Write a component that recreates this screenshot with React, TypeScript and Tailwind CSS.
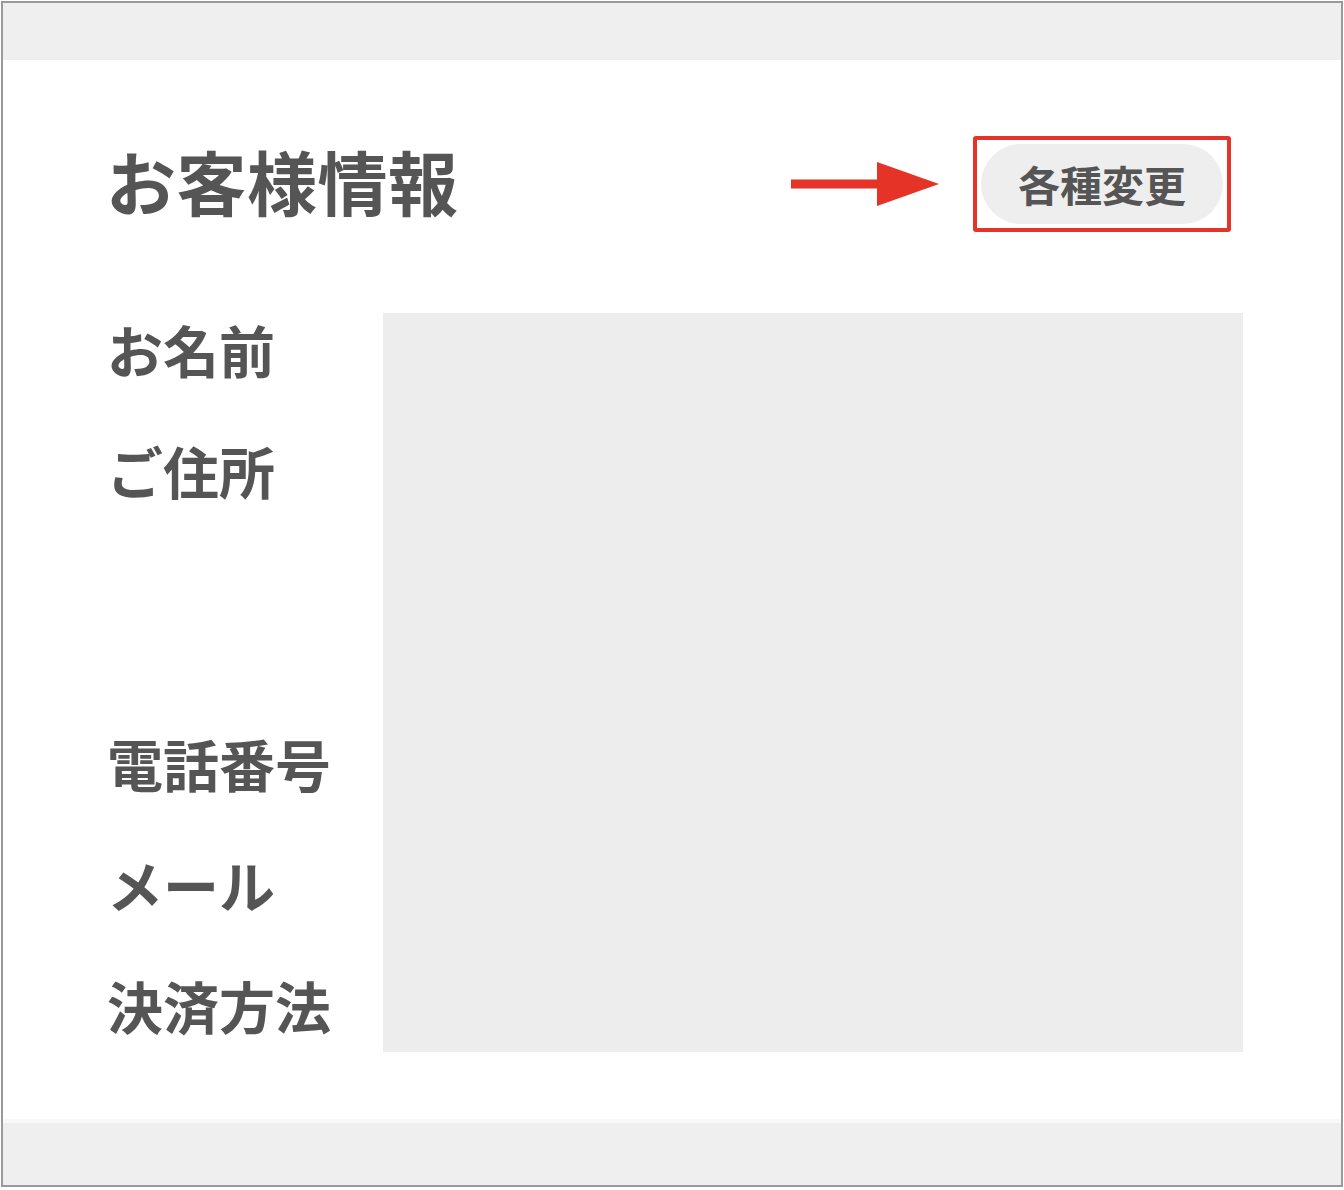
const labelFont = { fontFamily: '"Noto Sans CJK JP", "Noto Sans", sans-serif' };

function Arrow() {
  return (
    <svg width="148" height="44" viewBox="0 0 148 44" className="shrink-0">
      <rect x="0" y="17.5" width="90" height="9" fill="#e53327" />
      <polygon points="86,0 148,22 86,44" fill="#e53327" />
    </svg>
  );
}

const rows = [
  { label: 'お名前', extra: false },
  { label: 'ご住所', extra: true },
  { label: '電話番号', extra: false },
  { label: 'メール', extra: false },
  { label: '決済方法', extra: false },
];

export default function App() {
  return (
    <div className="w-[1344px] h-[1190px] bg-white p-px" style={labelFont}>
      <div className="h-[1186px] border-2 border-[#9a9a9a] flex flex-col">
        {/* top bar */}
        <div className="h-[57px] bg-[#efefef] shrink-0" />

        <div className="flex-1 flex flex-col">
          {/* heading */}
          <div className="h-[248px] flex items-center justify-between pl-[103px] pr-[110px]">
            <h1 className="mb-[6px] text-[70px] leading-none font-bold text-[#555555] tracking-[0.5px]">お客様情報</h1>
            <div className="flex items-center gap-[34px]">
              <Arrow />
              <div className="w-[258px] h-[96px] border-4 border-[#e53327] rounded-[3px] p-[4px] flex">
                <button className="flex-1 rounded-full bg-[#eeeeee] text-[42px] leading-none font-semibold text-[#555555]">
                  各種変更
                </button>
              </div>
            </div>
          </div>

          {/* details */}
          <div className="mt-[5px] flex pl-[104px] pr-[98px]">
            <div className="w-[276px] shrink-0 -mt-[4px] flex flex-col gap-[41px]">
              {rows.map((r) => (
                <div
                  key={r.label}
                  className={`h-[80px] flex items-center text-[56px] leading-none font-bold text-[#555555] ${r.extra ? 'mb-[172px]' : ''}`}
                >
                  {r.label}
                </div>
              ))}
            </div>
            <div className="flex-1 h-[739px] bg-[#ededed]" />
          </div>
        </div>

        {/* bottom bar */}
        <div className="h-[4px] bg-[#f9f9f9] shrink-0" />
        <div className="h-[62px] bg-[#efefef] shrink-0" />
      </div>
    </div>
  );
}
